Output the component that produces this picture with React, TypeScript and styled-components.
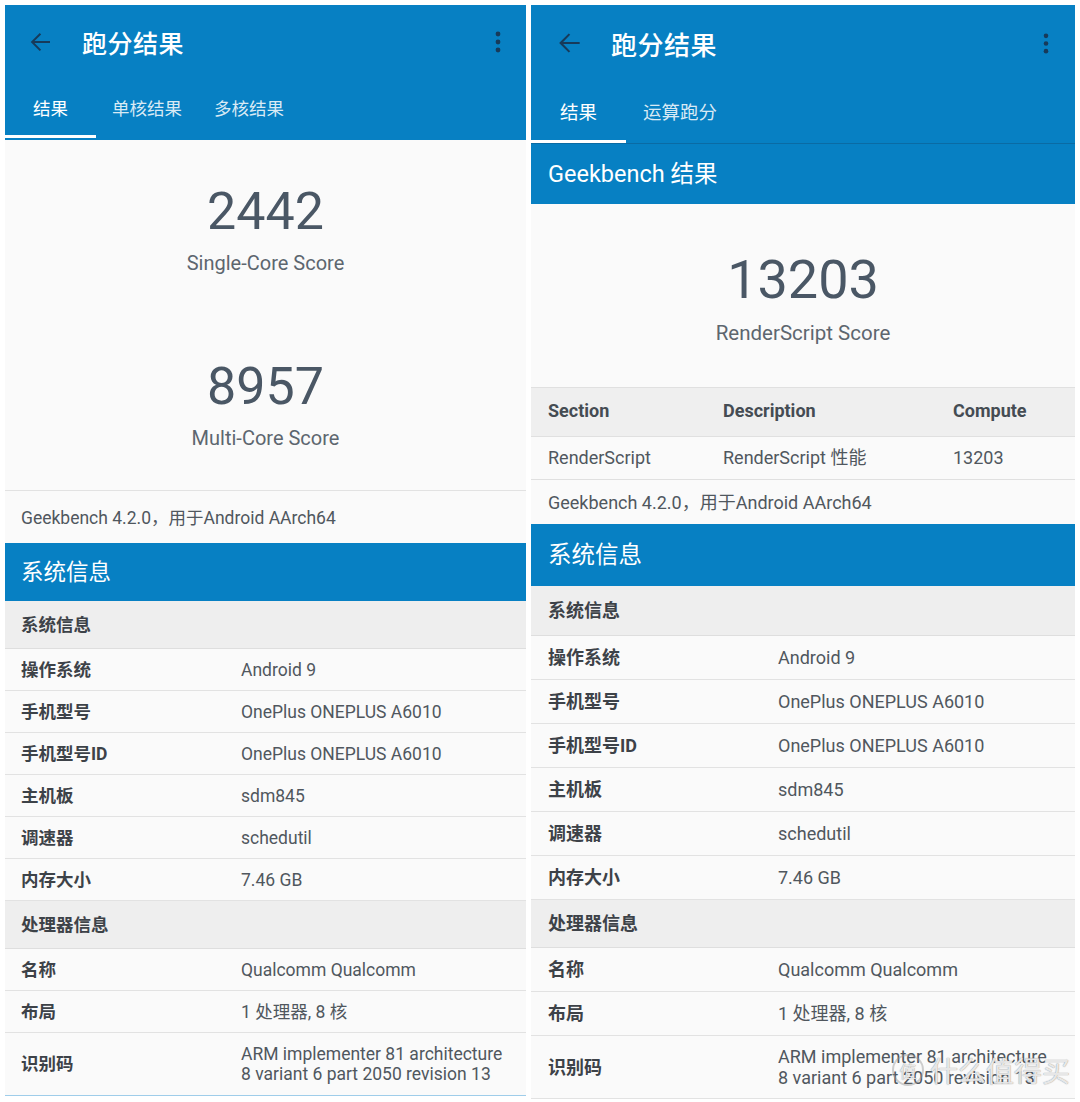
import React from "react";
import styled, { createGlobalStyle, ThemeProvider } from "styled-components";

type Metrics = {
  width: number;
  toolH: number;
  arrowL: number;
  arrowSize: number;
  titleL: number;
  titleFs: number;
  dotsR: number;
  dotsH: number;
  tabH: number;
  tabPadB: number;
  tabFs: number;
  tabMin: number;
  tabPad: number;
  barLine: string;
  scorePadT: number;
  scorePadB: number;
  scoreGap: number;
  scoreFs: number;
  labelGap: number;
  labelFs: number;
  padX: number;
  fs: number;
  labelW: number;
  rowH: number;
  subH: number;
  headH: number;
  headFs: number;
  versionH: number;
  lineH: number;
  multiPad: number;
};

const leftM: Metrics = {
  width: 521,
  toolH: 74,
  arrowL: 20,
  arrowSize: 30,
  titleL: 77,
  titleFs: 25,
  dotsR: 24,
  dotsH: 22,
  tabH: 59,
  tabPadB: 2,
  tabFs: 17.5,
  tabMin: 91,
  tabPad: 16,
  barLine: "none",
  scorePadT: 41,
  scorePadB: 40,
  scoreGap: 81,
  scoreFs: 52,
  labelGap: 8,
  labelFs: 20,
  padX: 16,
  fs: 17.5,
  labelW: 220,
  rowH: 42,
  subH: 48,
  headH: 58,
  headFs: 22.5,
  versionH: 53,
  lineH: 20,
  multiPad: 11,
};

const rightM: Metrics = {
  width: 544,
  toolH: 76,
  arrowL: 22,
  arrowSize: 32,
  titleL: 80,
  titleFs: 26,
  dotsR: 25,
  dotsH: 21,
  tabH: 62,
  tabPadB: 0,
  tabFs: 18.5,
  tabMin: 95,
  tabPad: 17,
  barLine: "1px solid #0a6ba4",
  scorePadT: 45,
  scorePadB: 42,
  scoreGap: 60,
  scoreFs: 54,
  labelGap: 10,
  labelFs: 20.5,
  padX: 17,
  fs: 18,
  labelW: 230,
  rowH: 44,
  subH: 50,
  headH: 62,
  headFs: 23.5,
  versionH: 44,
  lineH: 21,
  multiPad: 10,
};

type T = { theme: Metrics };

const BLUE = "#0780c3";

const GlobalStyle = createGlobalStyle`
  html, body {
    margin: 0;
    padding: 0;
    background: #ffffff;
  }
  body {
    font-family: Roboto, "Noto Sans CJK SC", sans-serif;
  }
  * { box-sizing: border-box; }
`;

const Page = styled.div`
  position: relative;
  display: flex;
  align-items: flex-start;
  gap: 5px;
  padding: 5px;
  height: 1102px;
  overflow: hidden;
  background: #ffffff;
`;

const Panel = styled.div`
  width: ${(p: T) => p.theme.width}px;
  flex: none;
  display: flex;
  flex-direction: column;
  background: #fafafa;
`;

const AppBar = styled.header`
  background: ${BLUE};
  border-bottom: ${(p: T) => p.theme.barLine};
`;

const Toolbar = styled.div`
  height: ${(p: T) => p.theme.toolH}px;
  display: flex;
  align-items: center;
  padding-left: ${(p: T) => p.theme.arrowL}px;
  padding-right: ${(p: T) => p.theme.dotsR}px;
`;

const IconBox = styled.span`
  display: flex;
  align-items: center;
  justify-content: center;
  color: #173a5a;
  flex: none;
`;

const Title = styled.h1`
  margin: 0 0 0 ${(p: T) => p.theme.titleL - p.theme.arrowL - p.theme.arrowSize}px;
  flex: 1;
  font-size: ${(p: T) => p.theme.titleFs}px;
  font-weight: 500;
  color: #ffffff;
  letter-spacing: 0.5px;
`;

const TabBar = styled.nav`
  display: flex;
  padding-bottom: ${(p: T) => p.theme.tabPadB}px;
`;

const Tab = styled.div<{ $active?: boolean }>`
  height: ${(p: T) => p.theme.tabH}px;
  min-width: ${(p: T) => p.theme.tabMin}px;
  padding: 0 ${(p: T) => p.theme.tabPad}px;
  display: flex;
  align-items: center;
  justify-content: center;
  font-size: ${(p: T) => p.theme.tabFs}px;
  color: ${(p) => (p.$active ? "#ffffff" : "rgba(255,255,255,0.85)")};
  border-bottom: 3px solid ${(p) => (p.$active ? "#ffffff" : "transparent")};
`;

const ScoreArea = styled.section`
  display: flex;
  flex-direction: column;
  align-items: center;
  gap: ${(p: T) => p.theme.scoreGap}px;
  padding: ${(p: T) => p.theme.scorePadT}px 0 ${(p: T) => p.theme.scorePadB}px;
`;

const ScoreBlock = styled.div`
  display: flex;
  flex-direction: column;
  align-items: center;
`;

const ScoreValue = styled.div`
  font-size: ${(p: T) => p.theme.scoreFs}px;
  line-height: 62px;
  color: #4a5765;
`;

const ScoreLabel = styled.div`
  margin-top: ${(p: T) => p.theme.labelGap}px;
  font-size: ${(p: T) => p.theme.labelFs}px;
  line-height: 24px;
  color: #5d666f;
`;

const VersionRow = styled.div<{ $top?: boolean }>`
  height: ${(p: T) => p.theme.versionH}px;
  display: flex;
  align-items: center;
  padding-left: ${(p: T) => p.theme.padX}px;
  padding-bottom: 2px;
  font-size: ${(p: T) => p.theme.fs}px;
  color: #50575e;
  border-top: ${(p) => (p.$top ? "1px solid #e2e2e2" : "none")};
`;

const SectionHeader = styled.h2<{ $h?: number }>`
  margin: 0;
  height: ${(p) => p.$h ?? (p.theme as Metrics).headH}px;
  display: flex;
  align-items: center;
  padding-left: ${(p: T) => p.theme.padX}px;
  padding-bottom: 4px;
  background: ${BLUE};
  color: #ffffff;
  font-size: ${(p: T) => p.theme.headFs}px;
  font-weight: 400;
`;

const SubHeader = styled.div<{ $h?: number }>`
  height: ${(p) => p.$h ?? (p.theme as Metrics).subH}px;
  display: flex;
  align-items: center;
  padding-left: ${(p: T) => p.theme.padX}px;
  padding-bottom: 3px;
  background: #eeeeee;
  border-bottom: 1px solid #dedede;
  font-size: ${(p: T) => p.theme.fs}px;
  font-weight: 700;
  color: #3d4248;
`;

const InfoRow = styled.div<{ $multi?: boolean; $accent?: boolean }>`
  display: grid;
  grid-template-columns: ${(p: T) => p.theme.labelW}px 1fr;
  align-items: center;
  min-height: ${(p: T) => p.theme.rowH}px;
  padding: ${(p) => (p.$multi ? (p.theme as Metrics).multiPad : 0)}px 0
    ${(p) => (p.$multi ? (p.theme as Metrics).multiPad : 0)}px ${(p: T) => p.theme.padX}px;
  border-bottom: 1px solid ${(p) => (p.$accent ? "#9fcdea" : "#e2e2e2")};
  font-size: ${(p: T) => p.theme.fs}px;
  line-height: ${(p: T) => p.theme.lineH}px;
`;

const Label = styled.div`
  font-weight: 700;
  color: #3d4248;
`;

const Value = styled.div`
  color: #50575e;
`;

const TableGrid = styled.div<{ $head?: boolean }>`
  display: grid;
  grid-template-columns: 175px 230px 1fr;
  align-items: center;
  height: ${(p) => (p.$head ? 50 : 43)}px;
  padding-left: ${(p: T) => p.theme.padX}px;
  padding-bottom: ${(p) => (p.$head ? 3 : 1)}px;
  background: ${(p) => (p.$head ? "#efefef" : "#fafafa")};
  border-top: ${(p) => (p.$head ? "1px solid #e0e0e0" : "none")};
  border-bottom: 1px solid #e0e0e0;
  font-size: ${(p: T) => p.theme.fs}px;
  line-height: 22px;
  font-weight: ${(p) => (p.$head ? 700 : 400)};
  color: ${(p) => (p.$head ? "#454c53" : "#50575e")};
`;

const Watermark = styled.div`
  position: absolute;
  right: 10px;
  bottom: 12px;
  display: flex;
  align-items: center;
  gap: 6px;
  color: rgba(255, 255, 255, 0.8);
  font-size: 28px;
  font-family: "Noto Sans CJK SC", sans-serif;
  text-shadow: 0 0 1px rgba(120, 120, 120, 0.6), 0 0 1px rgba(120, 120, 120, 0.6);
  pointer-events: none;
`;

const WatermarkLogo = styled.span`
  width: 32px;
  height: 32px;
  border-radius: 50%;
  border: 2px solid rgba(150, 150, 150, 0.45);
  display: flex;
  align-items: center;
  justify-content: center;
  font-size: 17px;
`;

const BackArrow = ({ size }: { size: number }) => (
  <IconBox>
    <svg width={size} height={size} viewBox="0 0 24 24" fill="currentColor">
      <path d="M20 11.2H7.6l5.3-5.3L11.8 4.8 4.6 12l7.2 7.2 1.1-1.1-5.3-5.3H20z" />
    </svg>
  </IconBox>
);

const MoreDots = ({ h }: { h: number }) => (
  <IconBox>
    <svg width={8} height={h} viewBox="0 0 8 22" fill="currentColor">
      <circle cx="4" cy="3" r="2.4" />
      <circle cx="4" cy="11" r="2.4" />
      <circle cx="4" cy="19" r="2.4" />
    </svg>
  </IconBox>
);

const Bar = ({ m, tabs }: { m: Metrics; tabs: string[] }) => (
  <AppBar>
    <Toolbar>
      <BackArrow size={m.arrowSize} />
      <Title>跑分结果</Title>
      <MoreDots h={m.dotsH} />
    </Toolbar>
    <TabBar>
      {tabs.map((t, i) => (
        <Tab key={t} $active={i === 0}>
          {t}
        </Tab>
      ))}
    </TabBar>
  </AppBar>
);

const systemRows: [string, string][] = [
  ["操作系统", "Android 9"],
  ["手机型号", "OnePlus ONEPLUS A6010"],
  ["手机型号ID", "OnePlus ONEPLUS A6010"],
  ["主机板", "sdm845"],
  ["调速器", "schedutil"],
  ["内存大小", "7.46 GB"],
];

const cpuRows: [string, string][] = [
  ["名称", "Qualcomm Qualcomm"],
  ["布局", "1 处理器, 8 核"],
];

const VERSION = "Geekbench 4.2.0，用于Android AArch64";

const InfoSections = ({ accentEnd, procH }: { accentEnd?: boolean; procH: number }) => (
  <>
    <SectionHeader>系统信息</SectionHeader>
    <SubHeader>系统信息</SubHeader>
    {systemRows.map(([k, v]) => (
      <InfoRow key={k}>
        <Label>{k}</Label>
        <Value>{v}</Value>
      </InfoRow>
    ))}
    <SubHeader $h={procH}>处理器信息</SubHeader>
    {cpuRows.map(([k, v]) => (
      <InfoRow key={k}>
        <Label>{k}</Label>
        <Value>{v}</Value>
      </InfoRow>
    ))}
    <InfoRow $multi $accent={accentEnd}>
      <Label>识别码</Label>
      <Value>
        ARM implementer 81 architecture
        <br />8 variant 6 part 2050 revision 13
      </Value>
    </InfoRow>
  </>
);

export default function App() {
  return (
    <>
      <GlobalStyle />
      <Page>
        <ThemeProvider theme={leftM}>
          <Panel>
            <Bar m={leftM} tabs={["结果", "单核结果", "多核结果"]} />
            <ScoreArea>
              <ScoreBlock>
                <ScoreValue>2442</ScoreValue>
                <ScoreLabel>Single-Core Score</ScoreLabel>
              </ScoreBlock>
              <ScoreBlock>
                <ScoreValue>8957</ScoreValue>
                <ScoreLabel>Multi-Core Score</ScoreLabel>
              </ScoreBlock>
            </ScoreArea>
            <VersionRow $top>{VERSION}</VersionRow>
            <InfoSections accentEnd procH={48} />
          </Panel>
        </ThemeProvider>
        <ThemeProvider theme={rightM}>
          <Panel>
            <Bar m={rightM} tabs={["结果", "运算跑分"]} />
            <SectionHeader $h={60}>Geekbench 结果</SectionHeader>
            <ScoreArea>
              <ScoreBlock>
                <ScoreValue>13203</ScoreValue>
                <ScoreLabel>RenderScript Score</ScoreLabel>
              </ScoreBlock>
            </ScoreArea>
            <TableGrid $head>
              <span>Section</span>
              <span>Description</span>
              <span>Compute</span>
            </TableGrid>
            <TableGrid>
              <span>RenderScript</span>
              <span>RenderScript 性能</span>
              <span>13203</span>
            </TableGrid>
            <VersionRow>{VERSION}</VersionRow>
            <InfoSections procH={48} />
          </Panel>
        </ThemeProvider>
        <Watermark>
          <WatermarkLogo>值</WatermarkLogo>
          什么值得买
        </Watermark>
      </Page>
    </>
  );
}
